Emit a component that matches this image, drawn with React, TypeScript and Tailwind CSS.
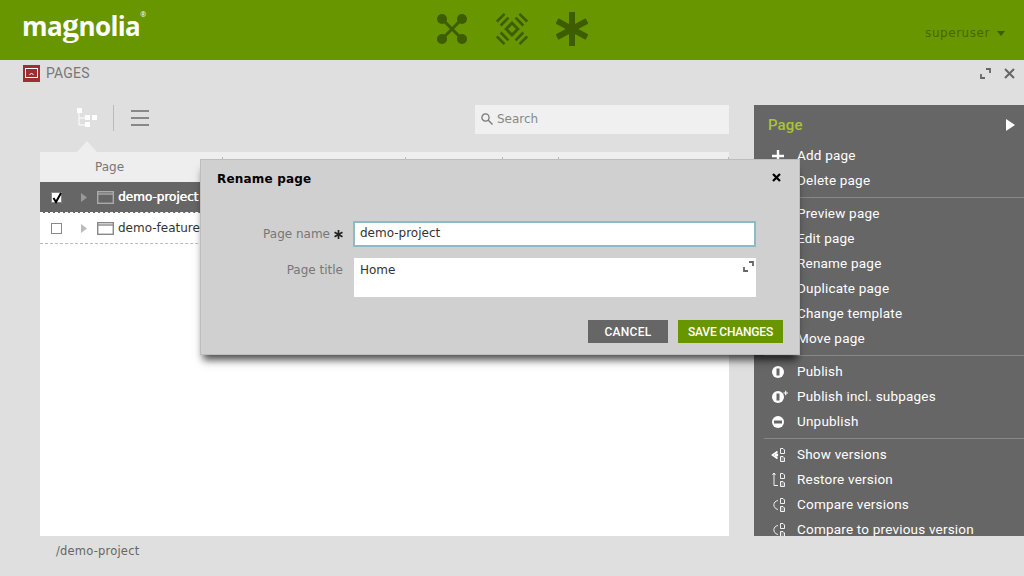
import React from 'react';

const din = "font-['Roboto',sans-serif]";
const dejavu = "font-['DejaVu_Sans',sans-serif]";

const AppIcons = () => (
  <div className="flex items-center gap-[29px] text-[#3e5c00]">
    <svg width="30" height="32" viewBox="0 0 30 32" fill="currentColor">
      <path d="M5 6 25 26M25 6 5 26" stroke="currentColor" strokeWidth="3" />
      <circle cx="5" cy="6" r="5" />
      <circle cx="25" cy="6" r="5" />
      <circle cx="5" cy="26" r="5" />
      <circle cx="25" cy="26" r="5" />
    </svg>
    <svg width="32" height="34" viewBox="-16 -17 32 34" fill="none" stroke="currentColor">
      <g transform="rotate(45)">
        <rect x="-4.2" y="-4.2" width="8.4" height="8.4" strokeWidth="2.8" />
        <path strokeWidth="2.6" d="M-5.5 -16H5.5M-5.5 -10.5H5.5M-5.5 16H5.5M-5.5 10.5H5.5M-16 -5.5V5.5M-10.5 -5.5V5.5M16 -5.5V5.5M10.5 -5.5V5.5" />
      </g>
    </svg>
    <svg className="-ml-px" width="32" height="34" viewBox="-16 -17 32 34" stroke="currentColor" strokeWidth="6">
      <path d="M0 -17V17M-15 -8 15 8M-15 8 15 -8" />
    </svg>
  </div>
);

const MaximizeIcon = ({ color = '#666' }: { color?: string }) => (
  <svg width="11" height="11" viewBox="0 0 11 11" fill="none" stroke={color} strokeWidth="1.8">
    <path d="M6 1H10V5M1 6V10H5" />
  </svg>
);

const WHITE = '#fff';

const DocPair = () => (
  <g fill="none" stroke={WHITE} strokeWidth="0.9">
    <path d="M10.5 1.5H13L14.5 3V6.5H10.5Z" />
    <path d="M10.5 9.5H13L14.5 11V14.5H10.5Z" fill={WHITE} fillOpacity=".2" />
  </g>
);

const icons: Record<string, React.ReactNode> = {
  plus: <path d="M8 2V14M2 8H14" stroke={WHITE} strokeWidth="2.4" />,
  minus: <path d="M3 8H13" stroke={WHITE} strokeWidth="2.4" />,
  publish: (
    <>
      <circle cx="8" cy="8" r="6" fill={WHITE} />
      <rect x="6.5" y="4.5" width="3" height="7" fill="#666" />
    </>
  ),
  publishSub: (
    <>
      <circle cx="8" cy="8" r="6" fill={WHITE} />
      <rect x="6.5" y="4.5" width="3" height="7" fill="#666" />
      <path d="M13.5 4H18M15.7 1.8V6.2" stroke={WHITE} strokeWidth="1.1" />
    </>
  ),
  unpublish: (
    <>
      <circle cx="8" cy="8" r="6" fill={WHITE} />
      <rect x="4" y="6.5" width="8" height="3" fill="#666" />
    </>
  ),
  show: (
    <>
      <path d="M7.5 4.5 2.5 8 7.5 11.5" fill="none" stroke={WHITE} strokeWidth="1.6" />
      <circle cx="6.5" cy="8" r="1.8" fill={WHITE} />
      <DocPair />
    </>
  ),
  restore: (
    <>
      <path d="M4 1V13.5H8M2.5 3 4 1 5.5 3" fill="none" stroke={WHITE} strokeWidth="0.9" />
      <DocPair />
    </>
  ),
  compare: (
    <>
      <path d="M8 3.5C3 4 2 11 8 12.5" fill="none" stroke={WHITE} strokeWidth="0.9" />
      <DocPair />
    </>
  ),
};

const actionGroups = [
  [
    { label: 'Add page', icon: 'plus' },
    { label: 'Delete page', icon: 'minus' },
  ],
  [
    { label: 'Preview page' },
    { label: 'Edit page' },
    { label: 'Rename page' },
    { label: 'Duplicate page' },
    { label: 'Change template' },
    { label: 'Move page' },
  ],
  [
    { label: 'Publish', icon: 'publish' },
    { label: 'Publish incl. subpages', icon: 'publishSub' },
    { label: 'Unpublish', icon: 'unpublish' },
  ],
  [
    { label: 'Show versions', icon: 'show' },
    { label: 'Restore version', icon: 'restore' },
    { label: 'Compare versions', icon: 'compare' },
    { label: 'Compare to previous version', icon: 'compare' },
  ],
];

const PageIcon = ({ color }: { color: string }) => (
  <svg width="17" height="13" viewBox="0 0 17 13" fill="none" stroke={color} strokeWidth="1.4">
    <rect x="0.7" y="0.7" width="15.6" height="11.6" />
    <path d="M1 3H16" />
  </svg>
);

const Row = ({ name, selected }: { name: string; selected?: boolean }) => (
  <div
    className={`flex h-[31px] items-center border-b border-dashed pl-[11px] ${
      selected ? 'bg-[#666] border-white text-white [text-shadow:0.5px_0_0_#fff]' : 'bg-white border-[#bbb] text-[#333]'
    }`}
  >
    <div className="relative h-[11px] w-[11px] border border-[#888] bg-white">
      {selected && (
        <svg className="absolute -top-[2px] left-0" width="11" height="13" viewBox="0 0 11 13" fill="none" stroke="#000" strokeWidth="2">
          <path d="M1.5 7 4 11 9 2" />
        </svg>
      )}
    </div>
    <svg className="ml-[19px]" width="6" height="9" viewBox="0 0 6 9" fill={selected ? '#999' : '#bbb'}>
      <path d="M0 0 6 4.5 0 9Z" />
    </svg>
    <div className="ml-[10px]">
      <PageIcon color={selected ? '#aaa' : '#888'} />
    </div>
    <span className="ml-[4px] whitespace-nowrap text-[12px]">{name}</span>
  </div>
);

const Dialog = () => (
  <div
    className={`absolute left-[200px] top-[159px] flex h-[196px] w-[600px] flex-col border border-[#bdbdbd] bg-[#d0d0d0] shadow-[0_8px_8px_-3px_rgba(0,0,0,0.7)] ${dejavu}`}
  >
    <div className="flex items-center justify-between pl-[16px] pr-[18px] pt-[11px]">
      <span className="text-[12px] font-bold leading-[16px] tracking-[0.2px] text-black">Rename page</span>
      <svg className="-translate-y-[2px]" width="9" height="9" viewBox="0 0 9 9" stroke="#000" strokeWidth="2.2">
        <path d="M1 1 8 8M8 1 1 8" />
      </svg>
    </div>
    <div className="mt-[34px] flex items-center">
      <div className="flex w-[142px] items-center justify-end gap-[4px] text-[12px] text-[#777]">
        Page name
        <svg width="9" height="9" viewBox="-5 -5 10 10" stroke="#222" strokeWidth="1.9">
          <path d="M0 -5V5M-4.4 -2.5 4.4 2.5M-4.4 2.5 4.4 -2.5" />
        </svg>
      </div>
      <div className="ml-[10px] flex h-[26px] w-[403px] items-center border-2 border-[#8fb9c4] bg-white pb-[2px] pl-[5px] text-[12px] text-[#333]">
        demo-project
      </div>
    </div>
    <div className="mt-[11px] flex items-start">
      <div className="w-[142px] pt-[4px] text-right text-[12px] leading-[16px] text-[#777]">Page title</div>
      <div className="relative ml-[11px] h-[39px] w-[402px] bg-white pl-[6px] pt-[4px] text-[12px] leading-[16px] text-[#333]">
        Home
        <div className="absolute right-[2px] top-[3px]">
          <MaximizeIcon />
        </div>
      </div>
    </div>
    <div className={`mt-[23px] flex justify-end gap-[10px] pr-[16px] text-[12px] font-medium text-white ${din}`}>
      <div className="flex h-[23px] w-[80px] items-center justify-center bg-[#666] tracking-[0.3px]">CANCEL</div>
      <div className="flex h-[23px] w-[105px] items-center justify-center bg-[#689600] tracking-[-0.2px]">SAVE CHANGES</div>
    </div>
  </div>
);

export default function App() {
  return (
    <div className="relative flex h-[576px] w-[1024px] flex-col overflow-hidden bg-[#dfdfdf]">
      <header className="relative flex h-[60px] shrink-0 items-center justify-between bg-[#689600] pl-[22px] pr-[19px]">
        <div className="flex -translate-y-[5px] items-start text-white">
          <span className="font-['Open_Sans',sans-serif] text-[26px] font-bold leading-none tracking-[-0.6px]">
            ma
            <span className="font-['Liberation_Serif',serif] text-[34px] leading-none">g</span>
            nolia
          </span>
          <span className="mt-[2px] text-[7px] leading-[10px]">®</span>
        </div>
        <div className="absolute left-[437px] top-[12px]">
          <AppIcons />
        </div>
        <div className={`flex items-center gap-[7px] pt-[6px] text-[12px] tracking-[0.55px] text-[#466600] ${dejavu}`}>
          superuser
          <svg width="8" height="5" viewBox="0 0 8 5" fill="#3e5c00">
            <path d="M0 0H8L4 5Z" />
          </svg>
        </div>
      </header>

      <div className="flex h-[26px] shrink-0 items-center pl-[23px] pr-[9px]">
        <div className="flex h-[17px] w-[17px] items-center justify-center bg-[#9e2f2f]">
          <div className="flex h-[10px] w-[13px] items-center justify-center border border-white">
            <svg width="5" height="3" viewBox="0 0 5 3" stroke="#fff" fill="none">
              <path d="M0.5 3 2.5 1 4.5 3" />
            </svg>
          </div>
        </div>
        <span className={`ml-[6px] text-[14px] tracking-[0.2px] text-[#777] ${din}`}>PAGES</span>
        <div className="ml-auto flex items-center gap-[13px]">
          <MaximizeIcon />
          <svg width="11" height="11" viewBox="0 0 11 11" stroke="#666" strokeWidth="2">
            <path d="M1 1 10 10M10 1 1 10" />
          </svg>
        </div>
      </div>

      <div className="flex h-[450px] shrink-0 pl-[40px] pt-[19px]">
        <main className="flex w-[689px] flex-col">
          <div className="flex h-[47px] shrink-0 items-start">
            <div className="relative h-[47px] w-[73px]">
              <svg className="absolute left-[37px] top-[3px]" width="21" height="20" viewBox="0 0 21 20" fill="#fff">
                <rect x="0" y="0" width="5" height="5" />
                <rect x="8" y="7" width="5" height="5" />
                <rect x="15" y="7" width="5" height="5" />
                <rect x="8" y="14" width="5" height="5" />
                <path d="M2 4V17H9M2 10H9" fill="none" stroke="#fff" />
              </svg>
              <div className="absolute bottom-0 left-[47px] h-0 w-0 -translate-x-1/2 border-x-[10px] border-b-[11px] border-x-transparent border-b-[#eee]" />
            </div>
            <div className="h-[26px] w-px bg-[#bbb]" />
            <div className="ml-[17px] mt-[5px] flex w-[18px] flex-col gap-[5px]">
              <div className="h-[2px] bg-[#888]" />
              <div className="h-[2px] bg-[#888]" />
              <div className="h-[2px] bg-[#888]" />
            </div>
            <div className={`ml-auto flex h-[29px] w-[254px] items-center gap-[4px] bg-[#f0f0f0] pb-[2px] pl-[6px] text-[12px] text-[#888] ${dejavu}`}>
              <svg width="12" height="12" viewBox="0 0 12 12" fill="none" stroke="#777" strokeWidth="1.3">
                <circle cx="4.5" cy="4.5" r="3.6" />
                <path d="M7.3 7.3 11.5 11.5" />
              </svg>
              Search
            </div>
          </div>
          <div className={`flex min-h-0 flex-1 flex-col bg-white ${dejavu}`}>
            <div className="relative flex h-[30px] shrink-0 items-center bg-[#eee] pl-[55px] text-[12px] text-[#777]">
              Page
              <div className="absolute left-[182px] top-[5px] h-[2px] w-px bg-[#bbb]" />
              <div className="absolute left-[365px] top-[5px] h-[2px] w-px bg-[#bbb]" />
              <div className="absolute left-[462px] top-[5px] h-[2px] w-px bg-[#bbb]" />
              <div className="absolute left-[518px] top-[5px] h-[2px] w-px bg-[#bbb]" />
              <div className="absolute left-[688px] top-[5px] h-[2px] w-px bg-[#bbb]" />
            </div>
            <Row name="demo-project" selected />
            <Row name="demo-features" />
          </div>
        </main>

        <aside className={`ml-[25px] flex w-[270px] flex-col overflow-hidden bg-[#666] ${din}`}>
          <div className="flex h-[38px] shrink-0 items-center justify-between pl-[14px] pr-[9px] pt-[2px]">
            <span className="text-[15px] font-medium tracking-[0.1px] text-[#a9c62a]">Page</span>
            <svg width="9" height="12" viewBox="0 0 9 12" fill="#fff">
              <path d="M0 0 9 6 0 12Z" />
            </svg>
          </div>
          {actionGroups.map((group, i) => (
            <div key={i} className={i > 0 ? 'mt-[4px] ml-[10px] border-t border-[#888] pt-[3px]' : ''}>
              {group.map((item) => (
                <div
                  key={item.label}
                  className={`flex h-[25px] items-center whitespace-nowrap text-[13.5px] tracking-[0.2px] text-white ${
                    i > 0 ? 'pl-[6px]' : 'pl-[16px]'
                  }`}
                >
                  <svg className="shrink-0" width="18" height="16" viewBox="0 0 18 16">
                    {item.icon ? icons[item.icon] : null}
                  </svg>
                  <span className="ml-[9px]">{item.label}</span>
                </div>
              ))}
            </div>
          ))}
        </aside>
      </div>

      <div className={`pl-[56px] pt-[7px] text-[11.5px] tracking-[0.2px] text-[#666] ${dejavu}`}>/demo-project</div>

      <Dialog />
    </div>
  );
}
